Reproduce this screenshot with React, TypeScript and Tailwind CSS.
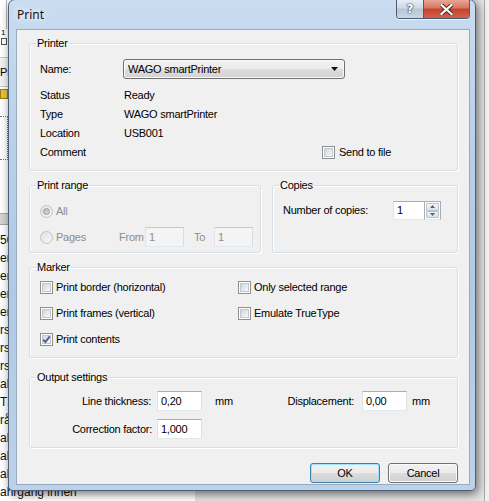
import React from "react";

function Group({
  title,
  className = "",
  children,
}: {
  title: string;
  className?: string;
  children: React.ReactNode;
}) {
  return (
    <fieldset
      className={
        "min-w-0 rounded-[3px] border border-[#d5dfe5] shadow-[inset_1px_1px_0_#ffffff,1px_1px_0_#ffffff] " +
        className
      }
    >
      <legend className="ml-[6px] px-[1px] leading-[14px]">{title}</legend>
      {children}
    </fieldset>
  );
}

function Check({ checked = false }: { checked?: boolean }) {
  return (
    <span className="flex h-[13px] w-[13px] shrink-0 border border-[#8e8f8f] bg-white p-[1px]">
      <span className="relative flex flex-1 items-center justify-center border border-[#c3c7cc] bg-gradient-to-br from-[#d2d5d9] to-[#f8f8f8]">
        {checked && (
          <svg width="9" height="9" viewBox="0 0 9 9" className="absolute left-[-1px] top-[-1px]">
            <path d="M1.2 4.6 L3.4 7 L7.8 1.4" fill="none" stroke="#4a5f97" strokeWidth="1.9" />
          </svg>
        )}
      </span>
    </span>
  );
}

function Radio({ selected = false }: { selected?: boolean }) {
  return (
    <span className="flex h-[13px] w-[13px] shrink-0 items-center justify-center rounded-full border border-[#c2c2c2] bg-gradient-to-br from-[#e2e2e2] to-[#f7f7f7]">
      {selected && (
        <span className="h-[7px] w-[7px] rounded-full border border-[#9a9a9a] bg-gradient-to-br from-[#b8b8b8] to-[#d8d8d8]" />
      )}
    </span>
  );
}

function TextBox({
  value,
  width,
  disabled = false,
}: {
  value: string;
  width: string;
  disabled?: boolean;
}) {
  return (
    <div
      className={
        "flex h-[20px] items-center border border-[#abadb3] border-b-[#e3e9ef] border-l-[#e2e3ea] border-r-[#dbdfe6] pl-[3px] " +
        width +
        (disabled
          ? " bg-[#f4f4f4] text-[#8d8d8d] border-[#c9c9c9] border-b-[#e0e0e0] border-l-[#dcdcdc] border-r-[#dcdcdc]"
          : " bg-white")
      }
    >
      {value}
    </div>
  );
}

function Dropdown() {
  return (
    <div className="flex h-[20px] w-[222px] items-center rounded-[3px] border border-[#707070] bg-[linear-gradient(#f3f3f3,#ebebeb_50%,#dddddd_50%,#d2d2d2)] pl-[4px] pr-[6px] shadow-[inset_0_0_0_1px_#fafafa]">
      <span className="flex-1">WAGO smartPrinter</span>
      <svg width="7" height="4" viewBox="0 0 7 4">
        <path d="M0 0 H7 L3.5 4 Z" fill="#111" />
      </svg>
    </div>
  );
}

function Spin() {
  return (
    <div className="flex h-[19px]">
      <div className="flex w-[31px] items-center border border-[#abadb3] border-b-[#e3e9ef] border-l-[#e2e3ea] border-r-0 bg-white pl-[3px]">
        1
      </div>
      <div className="flex w-[17px] flex-col border border-[#abadb3] border-b-[#e3e9ef] bg-white p-[1px]">
        <div className="flex flex-1 items-center justify-center rounded-[1px] border border-[#b9c3cf] bg-gradient-to-b from-[#f4f6f8] to-[#dfe4ea]">
          <svg width="5" height="3" viewBox="0 0 5 3">
            <path d="M0 3 L2.5 0 L5 3 Z" fill="#4d6185" />
          </svg>
        </div>
        <div className="flex flex-1 items-center justify-center rounded-[1px] border border-[#b9c3cf] bg-gradient-to-b from-[#eef1f4] to-[#dbe1e8]">
          <svg width="5" height="3" viewBox="0 0 5 3">
            <path d="M0 0 L5 0 L2.5 3 Z" fill="#4d6185" />
          </svg>
        </div>
      </div>
    </div>
  );
}

function Button({ label, def = false }: { label: string; def?: boolean }) {
  return (
    <div
      className={
        "flex h-[20px] w-[70px] items-center justify-center rounded-[3px] border bg-[linear-gradient(#f2f2f2,#ebebeb_50%,#dddddd_50%,#cfcfcf)] " +
        (def
          ? "border-[#3c7fb1] shadow-[inset_0_0_0_1px_#9ee2fb]"
          : "border-[#707070] shadow-[inset_0_0_0_1px_#fbfbfb]")
      }
    >
      {label}
    </div>
  );
}

function Background() {
  const rows = [
    "50",
    "emme",
    "emme",
    "emme",
    "emme",
    "rslag",
    "rslag",
    "rslag",
    "abell",
    "TS",
    "råk",
    "ahr",
    "ahr",
    "ahr",
    "ahrgang innen",
  ];
  return (
    <div className="flex h-full w-full">
      <div className="flex w-[195px] flex-col bg-white">
        <div className="h-[30px] w-[7px] border-r border-[#b9b9b9]" />
        <div className="flex h-[28px] flex-col pl-[1px] text-[8px] leading-[8px]">
          <span>1</span>
          <span className="mt-[1px] h-[7px] w-[6px] border border-[#555]" />
        </div>
        <div className="h-[1px] bg-[#c8c8c8]" />
        <div className="flex h-[29px] items-center bg-[#f3f3f3] text-[11px]">
          <span>Pr</span>
        </div>
        <div className="h-[1px] bg-[#c8c8c8]" />
        <div className="flex h-[30px] items-start pt-[2px]">
          <span className="h-[10px] w-[8px] border border-[#9a7b10] bg-[#e8c53a]" />
        </div>
        <div className="h-[44px] w-[8px] border border-l-0 border-dotted border-[#777]" />
        <div className="h-[55px]" />
        <div className="h-[12px] border-y border-[#a8a8a8] bg-[#d4d4d4]" />
        <div className="h-[6px]" />
        {rows.map((r, i) => (
          <div key={i} className="flex h-[18px] items-center text-[12px] text-[#111]">
            <span className="whitespace-nowrap">{r}</span>
          </div>
        ))}
      </div>
      <div className="flex flex-1 bg-[#e3e3e3]">
        <div className="flex-1" />
        <div className="w-[1px] bg-[#a9a9a9]" />
        <div className="w-[4px] bg-[#f1f1f1]" />
      </div>
    </div>
  );
}

export default function App() {
  return (
    <div className="relative h-[501px] w-[489px] overflow-hidden font-['Liberation_Sans',Arial,sans-serif] text-[11px] text-black">
      <Background />

      {/* dialog window */}
      <div className="absolute left-[8px] top-[-1px] flex w-[468px] flex-col rounded-b-[5px] rounded-t-[7px] border border-[#4f6076] bg-[linear-gradient(180deg,#c9dcf0_0%,#b9d0ea_30%,#b0c9e5_60%,#bcd2ea_100%)] pb-[5px] pl-[7px] pr-[5px] shadow-[2px_3px_10px_rgba(0,0,0,0.55)]">
        {/* title bar */}
        <div className="flex h-[29px] items-center pl-[1px] font-['Noto_Sans',sans-serif] text-[12px] text-[#111] [text-shadow:0_0_6px_#ffffff,0_0_10px_#ffffff]">
          Print
        </div>

        {/* caption buttons */}
        <div className="absolute right-[5px] top-0 flex h-[19px] overflow-hidden rounded-b-[4px] border border-t-0 border-[#4c5b70] shadow-[0_1px_0_rgba(255,255,255,0.6)]">
          <div className="flex w-[27px] items-center justify-center border-r border-[#4c5b70] bg-[linear-gradient(#e6edf5,#cdd9e6_45%,#b5c5d7_50%,#c9d7e5)] font-['DejaVu_Sans',sans-serif] text-[12px] font-bold text-white [text-shadow:0_0_1px_#3a4758,0_0_1px_#3a4758,0_0_2px_#3a4758]">
            ?
          </div>
          <div className="flex w-[45px] items-center justify-center bg-[linear-gradient(#e8a796,#d7735f_45%,#c7412b_50%,#d4614a)]">
            <svg width="13" height="11" viewBox="0 0 13 11">
              <path
                d="M1.5 1 L11.5 10 M11.5 1 L1.5 10"
                stroke="#4a1d16"
                strokeWidth="4"
                strokeLinecap="square"
              />
              <path
                d="M1.5 1 L11.5 10 M11.5 1 L1.5 10"
                stroke="#ffffff"
                strokeWidth="2.2"
                strokeLinecap="square"
              />
            </svg>
          </div>
        </div>

        {/* client area */}
        <div className="flex flex-col border border-[#97abc3] bg-[#f0f0f0] pb-[1px] pl-[12px] pr-[11px] pt-[6px] tracking-[-0.25px]">
          {/* Printer */}
          <Group title="Printer">
            <div className="pb-[8px] pl-[10px] pt-[9px]">
              <div className="flex h-[20px] items-center">
                <span className="w-[83px]">Name:</span>
                <Dropdown />
              </div>
              <div className="mt-[7px] flex flex-col">
                <div className="flex h-[19px] items-center">
                  <span className="w-[84px]">Status</span>
                  <span>Ready</span>
                </div>
                <div className="flex h-[19px] items-center">
                  <span className="w-[84px]">Type</span>
                  <span>WAGO smartPrinter</span>
                </div>
                <div className="flex h-[19px] items-center">
                  <span className="w-[84px]">Location</span>
                  <span>USB001</span>
                </div>
                <div className="flex h-[19px] items-center">
                  <span className="w-[84px]">Comment</span>
                  <span className="ml-[198px] flex items-center gap-[4px]">
                    <Check />
                    <span>Send to file</span>
                  </span>
                </div>
              </div>
            </div>
          </Group>

          {/* Print range + Copies */}
          <div className="mt-[7px] flex gap-[11px]">
            <Group title="Print range" className="w-[232px] shrink-0">
              <div className="pb-[5px] pl-[10px] pt-[9px] text-[#8d8d8d]">
                <div className="flex h-[20px] items-center gap-[3px]">
                  <Radio selected />
                  <span>All</span>
                </div>
                <div className="mt-[6px] flex h-[20px] items-center">
                  <Radio />
                  <span className="ml-[3px] w-[63px]">Pages</span>
                  <span className="w-[26px]">From</span>
                  <TextBox value="1" width="w-[39px]" disabled />
                  <span className="ml-[10px] w-[20px]">To</span>
                  <TextBox value="1" width="w-[39px]" disabled />
                </div>
              </div>
            </Group>
            <Group title="Copies" className="flex-1">
              <div className="flex items-center pl-[10px] pt-[9px]">
                <span className="w-[110px]">Number of copies:</span>
                <Spin />
              </div>
            </Group>
          </div>

          {/* Marker */}
          <Group title="Marker" className="mt-[7px]">
            <div className="grid grid-cols-[198px_1fr] pb-[5px] pl-[10px]">
              <label className="flex h-[26px] items-center gap-[3px]">
                <Check />
                <span>Print border (horizontal)</span>
              </label>
              <label className="flex h-[26px] items-center gap-[3px]">
                <Check />
                <span>Only selected range</span>
              </label>
              <label className="flex h-[26px] items-center gap-[3px]">
                <Check />
                <span>Print frames (vertical)</span>
              </label>
              <label className="flex h-[26px] items-center gap-[3px]">
                <Check />
                <span>Emulate TrueType</span>
              </label>
              <label className="flex h-[26px] items-center gap-[3px]">
                <Check checked />
                <span>Print contents</span>
              </label>
            </div>
          </Group>

          {/* Output settings */}
          <Group title="Output settings" className="mt-[12px]">
            <div className="flex flex-col pb-[8px] pt-[7px]">
              <div className="flex h-[20px] items-center">
                <span className="w-[122px] pr-[1px] text-right">Line thickness:</span>
                <span className="w-[5px]" />
                <TextBox value="0,20" width="w-[45px]" />
                <span className="ml-[13px] w-[22px]">mm</span>
                <span className="w-[117px] text-right">Displacement:</span>
                <span className="w-[8px]" />
                <TextBox value="0,00" width="w-[45px]" />
                <span className="ml-[5px]">mm</span>
              </div>
              <div className="mt-[8px] flex h-[20px] items-center">
                <span className="w-[122px] text-right">Correction factor:</span>
                <span className="w-[5px]" />
                <TextBox value="1,000" width="w-[45px]" />
              </div>
            </div>
          </Group>

          {/* Buttons */}
          <div className="mt-[15px] flex justify-end gap-[8px]">
            <Button label="OK" def />
            <Button label="Cancel" />
          </div>
        </div>
      </div>
    </div>
  );
}
